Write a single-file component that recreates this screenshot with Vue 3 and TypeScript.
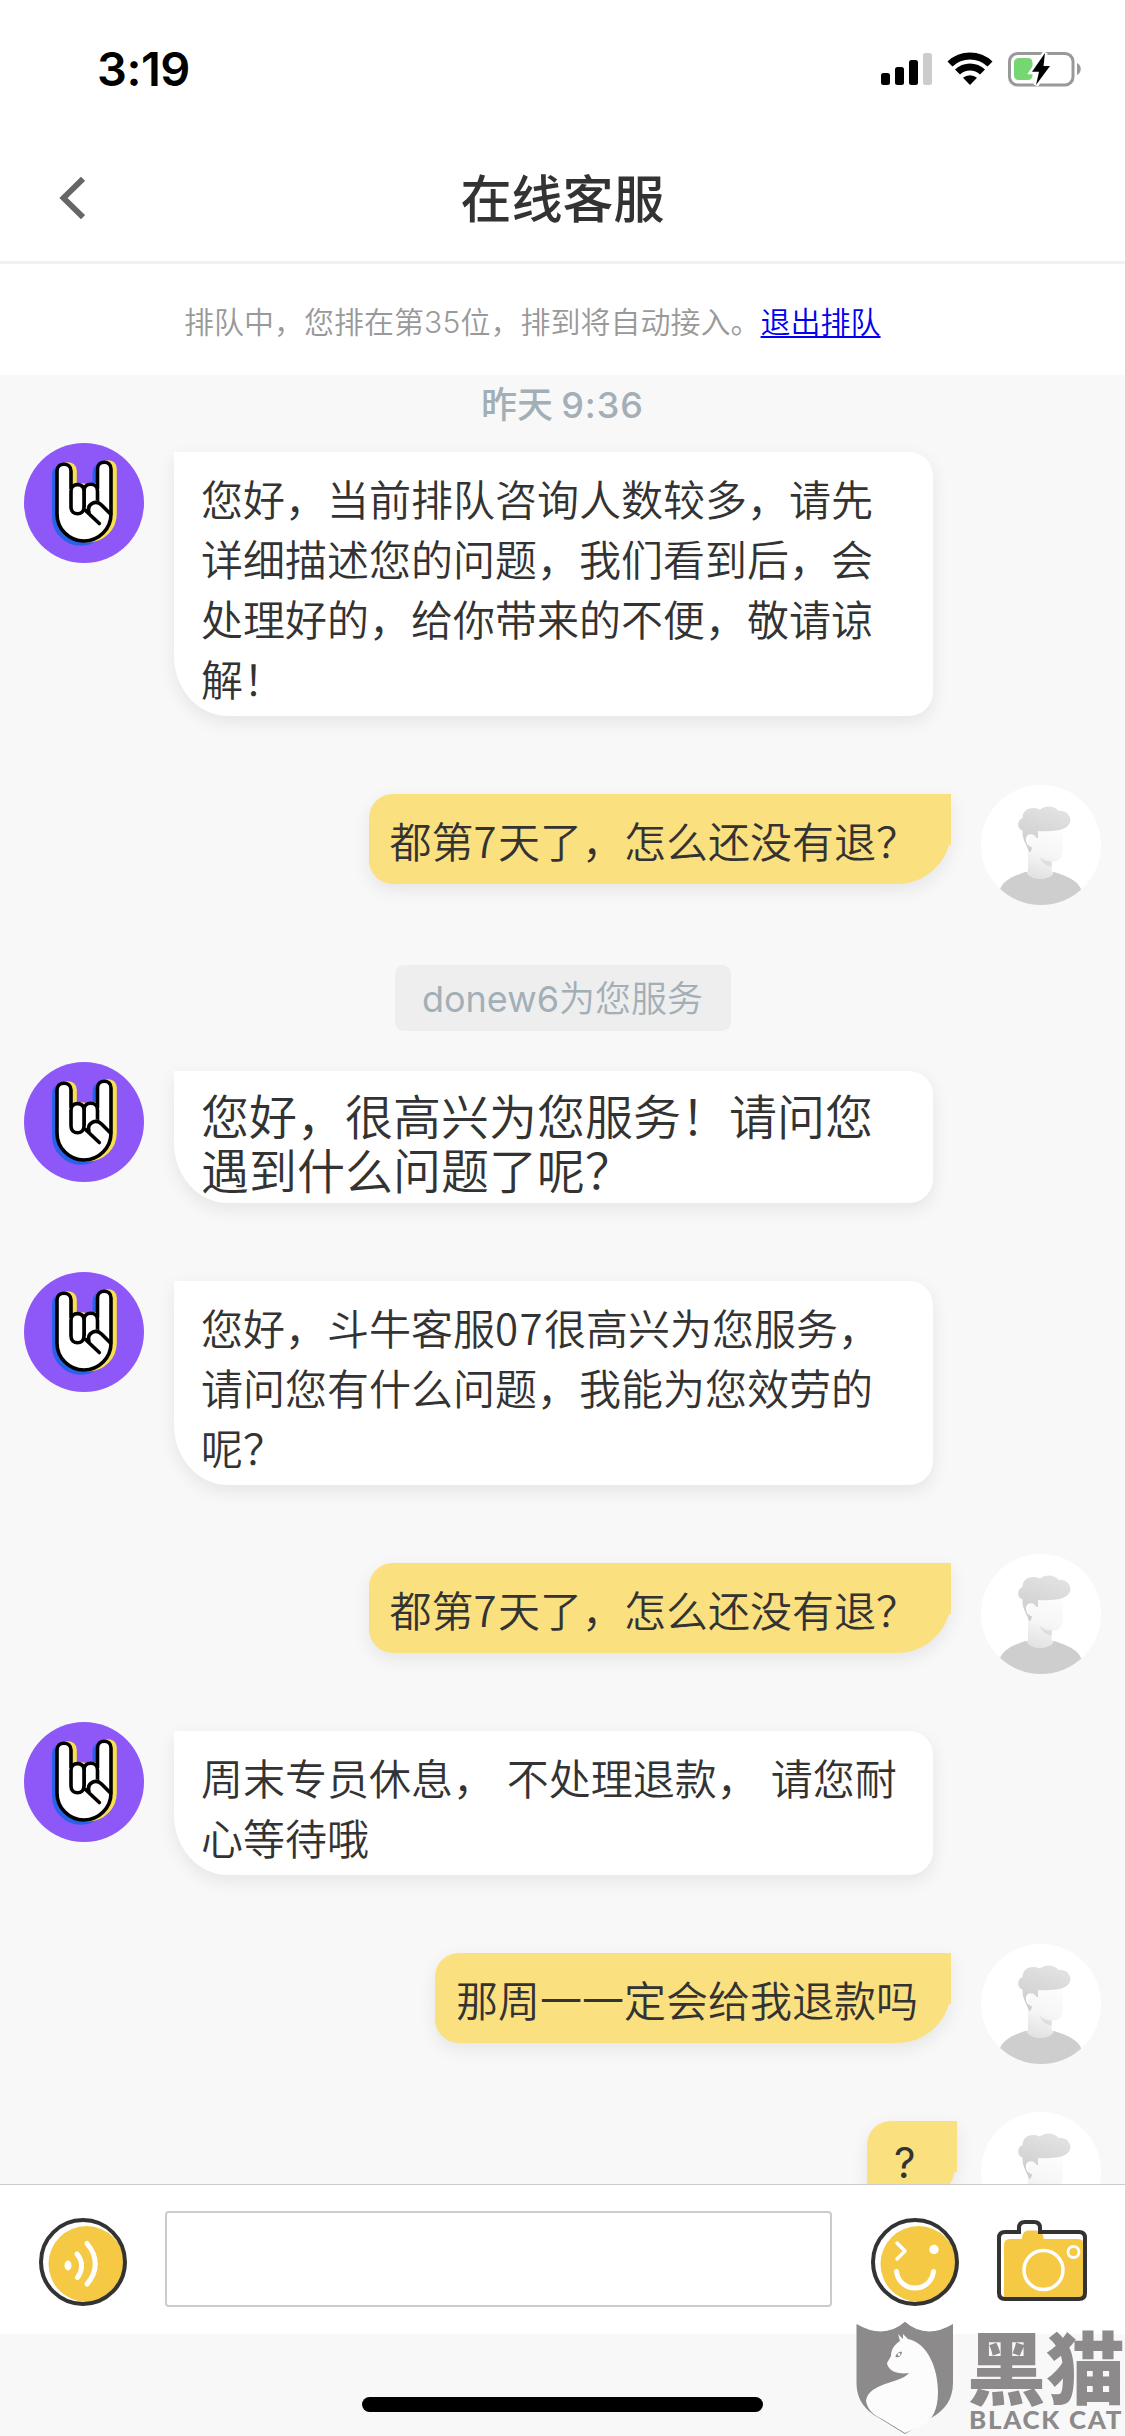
<script setup lang="ts">
interface Row {
  kind: 'agent' | 'user' | 'notice'
  lines: string[]
  large?: boolean
  short?: boolean
}

const rows: Row[] = [
  { kind: 'agent', lines: ['您好，当前排队咨询人数较多，请先', '详细描述您的问题，我们看到后，会', '处理好的，给你带来的不便，敬请谅', '解！'] },
  { kind: 'user', lines: ['都第7天了，怎么还没有退？'] },
  { kind: 'notice', lines: ['donew6为您服务'] },
  { kind: 'agent', large: true, lines: ['您好，很高兴为您服务！请问您', '遇到什么问题了呢？'] },
  { kind: 'agent', lines: ['您好，斗牛客服07很高兴为您服务，', '请问您有什么问题，我能为您效劳的', '呢？'] },
  { kind: 'user', lines: ['都第7天了，怎么还没有退？'] },
  { kind: 'agent', lines: ['周末专员休息， 不处理退款， 请您耐', '心等待哦'] },
  { kind: 'user', lines: ['那周一一定会给我退款吗'] },
  { kind: 'user', short: true, lines: ['?'] },
]

// Digits are set slightly wider than the surrounding Han text.
const split = (line: string): string[] => line.split(/(\d+)/).filter((s) => s.length > 0)
const isNum = (s: string): boolean => /^\d+$/.test(s)
</script>

<template>
  <div class="screen">
    <svg class="defs" width="0" height="0">
      <defs>
        <linearGradient id="hair" x1="0.6" y1="0" x2="0.2" y2="1">
          <stop offset="0" stop-color="#e2e2e2" />
          <stop offset="1" stop-color="#cccccc" />
        </linearGradient>
        <linearGradient id="skin" x1="0.6" y1="0" x2="0.4" y2="1">
          <stop offset="0" stop-color="#fcfcfc" />
          <stop offset="0.5" stop-color="#f6f6f6" />
          <stop offset="1" stop-color="#e2e2e2" />
        </linearGradient>
        <clipPath id="round"><circle cx="60" cy="60" r="60" /></clipPath>
        <path id="hand" d="M33 28c0-9 14-9 14 0v18c2-5 11-5 13 0 2-5 11-5 13.500 0V26c0-9 13.500-9 13.500 0v45a27 27 0 0 1-54 0z" />
      </defs>
    </svg>

    <div class="status">
      <span class="time">3:19</span>
      <svg class="status-icons" width="201" height="36" viewBox="881 51 201 36">
        <g>
          <rect x="881" y="73" width="9" height="12" rx="2.500" />
          <rect x="895" y="67" width="9" height="18" rx="2.500" />
          <rect x="909" y="60" width="9" height="25" rx="2.500" />
          <rect x="923" y="53" width="9" height="32" rx="2.500" fill="#ccc" />
        </g>
        <path d="M947.500 61.500a32.500 32.500 0 0 1 45 0l-5 5a25.500 25.500 0 0 0-35 0z" />
        <path d="M955 69.500a21.500 21.500 0 0 1 30 0l-5 5a14.500 14.500 0 0 0-20 0z" />
        <path d="M963 77.800a10.500 10.500 0 0 1 14 0l-7 7.200z" />
        <rect x="1009.500" y="53.500" width="63.500" height="31.500" rx="8" fill="none" stroke="#999" stroke-width="3" />
        <path d="M1077 63c5 2 5 10 0 12z" fill="#999" />
        <rect x="1014" y="58" width="18.500" height="22" rx="4.500" fill="#76d672" />
        <path d="M1045 53l-13 18.700h7l-3 13.300 14-19h-6.500z" stroke="#fff" stroke-width="5" />
        <path d="M1045 53l-13 18.700h7l-3 13.300 14-19h-6.500z" />
      </svg>
    </div>

    <header class="nav">
      <svg class="back" width="26" height="42" viewBox="0 0 26 42">
        <path d="M24 1.800L4.500 21 24 40.200" fill="none" stroke="#666" stroke-width="5.800" />
      </svg>
      <h1>在线客服</h1>
    </header>

    <div class="queue">
      <span>排队中，您排在第<i>35</i>位，排到将自动接入。</span><a>退出排队</a>
    </div>

    <main class="chat">
      <div class="date">昨天 <b>9:36</b></div>
      <div v-for="(row, i) in rows" :key="i" class="row" :class="[row.kind, { large: row.large, short: row.short }]">
        <svg v-if="row.kind === 'agent'" class="avatar" viewBox="0 0 120 120">
          <circle cx="60" cy="60" r="60" fill="#8e57f7" />
          <use href="#hand" x="-3.200" y="3" fill="#2962e8" stroke="#2962e8" stroke-width="3.600" />
          <use href="#hand" x="4" y="-0.300" fill="#f9e14b" stroke="#f9e14b" stroke-width="3.600" />
          <use href="#hand" fill="#fff" stroke="#000" stroke-width="3.600" />
          <g fill="#fff" stroke="#000" stroke-width="3.600" stroke-linecap="round" stroke-linejoin="round">
            <path d="M60 63V48c0-9 13.500-9 13.500 0v16" />
            <path d="M47 48v16c0 9 13 9 13 0V48c0-8.500-13-8.500-13 0z" />
            <path d="M75.300 80.500L61 67h4.500c-2-8 6-12.500 12-7L86.500 70" stroke="none" />
            <path d="M61.500 67.500l13.800 13M65 69.500c-2.500-9 7-13 12.500-7.500L86.500 71" fill="none" />
          </g>
        </svg>

        <div v-if="row.kind === 'notice'" class="pill">
          <span class="latin">donew6</span>为您服务
        </div>
        <div v-else class="bubble">
          <p v-for="(line, j) in row.lines" :key="j">
            <span v-for="(part, k) in split(line)" :key="k" :class="{ num: isNum(part) }">{{ part }}</span>
          </p>
        </div>

        <svg v-if="row.kind === 'user'" class="avatar" viewBox="0 0 120 120">
          <circle cx="60" cy="60" r="60" fill="#fff" />
          <g clip-path="url(#round)">
            <path d="M19 104c3-8 13-13 25-17h29c13 4 24 9 27 17v20H19z" fill="#cecece" />
            <path d="M50 44h31.700v22c0 7-4 11-11 10.500V86l2 2c-5 8-22 8-27 0l1.300-3V58z" fill="url(#skin)" />
            <path d="M59 72c3 3 7 4.500 11.700 4.500v5C65 81 60 77 59 72z" fill="#dedede" />
            <path d="M41.500 45.500c-6-2-5.500-10.500 0-12.500 0-10 11-12 17.500-8.500 5-4.500 15-4 18.500 1.500 6-1 11.500 3 12 9C89 44 78 47 57 46v7h-1.500c-2.500-6-10.500-4.500-10.500 1 0 4 1.500 7 6 8.500-.5 3-1.500 5-3 4.500C46.500 60 41 56 41.500 45.500z" fill="url(#hair)" />
          </g>
        </svg>
      </div>
    </main>

    <footer class="composer">
      <svg width="88" height="88" viewBox="0 0 88 88">
        <circle cx="47.500" cy="46" r="38" fill="#f5c944" />
        <circle cx="44" cy="44" r="42" fill="none" stroke="#333" stroke-width="4" />
        <ellipse cx="29" cy="47.500" rx="3.500" ry="5" fill="#fff" />
        <path d="M38 36c6 7 6 16 .5 23.500M48 25.500c11 13 11 28 0 40.500" fill="none" stroke="#fff" stroke-width="5" stroke-linecap="round" />
      </svg>
      <div class="field"></div>
      <svg width="88" height="88" viewBox="0 0 88 88">
        <circle cx="47.500" cy="46" r="38" fill="#f5c944" />
        <circle cx="44" cy="44" r="42" fill="none" stroke="#333" stroke-width="4" />
        <circle cx="63" cy="31.500" r="4.700" fill="#fff" />
        <path d="M26 25l8 8-8 8" fill="none" stroke="#fff" stroke-width="3.500" stroke-linecap="round" stroke-linejoin="round" />
        <path d="M25.500 53.500c3 22 34 22 37 0" fill="none" stroke="#fff" stroke-width="5" stroke-linecap="round" />
      </svg>
      <svg class="camera" width="90" height="82" viewBox="0 0 90 82">
        <path d="M7 25q0-6 6-6h12c0-6 3-8.500 7-8.500h7c5 0 7.500 3 7.500 8.500H81q6 0 6 6v53H7z" fill="#f5c944" />
        <path d="M8 12h14V8q0-6 6-6h9q6 0 6 6v4h39q6 0 6 6v55q0 6-6 6H8q-6 0-6-6V18q0-6 6-6z" fill="none" stroke="#333" stroke-width="4" />
        <circle cx="46.500" cy="50" r="19.500" fill="none" stroke="#fff" stroke-width="3.500" />
        <circle cx="76.500" cy="32" r="5.500" fill="none" stroke="#fff" stroke-width="2.800" />
      </svg>
    </footer>

    <div class="bottom">
      <div class="home"></div>
      <div class="brand">
        <svg width="98" height="115" viewBox="0 0 98 115">
          <path d="M.5 3Q28 19 49 .8 70 19 97 3v58c0 18-8 28-22 36L49 113 23 97C9 89 .5 79 .5 61z" fill="#8c8a8b" />
          <path d="M10 80c2-16 28-18 38-24 3-2 4-3 5-4-6 1-11 0-14-1-4-1-8-6-8-9l4-7c0-7 4-12 9-15l-2-7 5 5 0-5 5 5c20 4 30 30 30 53 0 18-6 27-13 32L49 112 26 98c-8-4-14-8-16-18z" fill="#fcfcfc" />
          <path d="M39.500 36c0-3 4-6 6.500-5-.5 4-3 6-6.500 5z" fill="#8c8a8b" />
          <circle cx="43" cy="33.500" r="1.400" fill="#fcfcfc" />
        </svg>
        <div class="brand-text">
          <strong>黑猫</strong>
          <em>BLACK CAT</em>
        </div>
      </div>
    </div>
  </div>
</template>

<style>
body {
  margin: 0;
  background: #f8f8f8;
}
</style>

<style scoped>
.screen {
  width: 1125px;
  height: 2436px;
  display: flex;
  flex-direction: column;
  overflow: hidden;
  background: #f8f8f8;
  color: #333;
  font-family: 'Noto Sans CJK SC', sans-serif;
}
.defs {
  position: absolute;
}
.status {
  height: 132px;
  flex: none;
  box-sizing: border-box;
  padding: 51px 43px 0 97px;
  display: flex;
  justify-content: space-between;
  background: #fff;
  color: #000;
}
.time {
  font: 600 47px/36px Inter, sans-serif;
  letter-spacing: -0.500px;
}
.nav {
  height: 129px;
  flex: none;
  position: relative;
  display: flex;
  align-items: center;
  justify-content: center;
  background: #fff;
  border-bottom: 3px solid #f1f1f1;
}
.back {
  position: absolute;
  left: 59px;
  top: 45px;
}
h1 {
  margin: 0 0 2px;
  font-size: 51px;
  line-height: 60px;
  font-weight: 500;
}
.queue {
  height: 111px;
  flex: none;
  box-sizing: border-box;
  padding: 34px 0 0 184px;
  background: #fff;
  color: #999;
  font-size: 30px;
  line-height: 44px;
  font-weight: 350;
  white-space: nowrap;
}
.queue i {
  font-style: normal;
  font-family: Inter, sans-serif;
  letter-spacing: 0.300px;
}
.queue a {
  color: #0000ee;
  text-decoration: underline;
  text-decoration-thickness: 2px;
  text-underline-offset: 3px;
}
.chat {
  height: 1809px;
  flex: none;
  overflow: hidden;
}
.date {
  height: 68px;
  line-height: 54px;
  text-align: center;
  font-size: 36px;
  font-weight: 500;
  color: #a3afb7;
}
.date b {
  font-family: Inter, sans-serif;
  font-weight: 500;
  letter-spacing: 1px;
}
.row {
  display: flex;
  align-items: flex-start;
}
.avatar {
  width: 120px;
  height: 120px;
  flex: none;
}
.agent {
  padding-left: 24px;
  margin-bottom: 69px;
}
.user {
  justify-content: flex-end;
  padding-right: 24px;
  margin-bottom: 48px;
}
.bubble {
  position: relative;
  box-sizing: border-box;
  margin-top: 9px;
  font-size: 42px;
  line-height: 60px;
  font-weight: 350;
  box-shadow: 0 6px 18px rgba(0, 0, 0, 0.08);
}
.bubble p {
  margin: 0;
  white-space: pre;
  word-spacing: 2.500px;
}
.num {
  letter-spacing: 1.400px;
}
.agent .bubble {
  width: 759px;
  margin-left: 30px;
  padding: 16px 0 8px 27px;
  background: #fff;
  border-radius: 0 24px 24px 54px / 0 24px 24px 60px;
}
.user .bubble {
  margin-right: 30px;
  padding: 16px 33px 14px 21px;
  background: #fbe080;
  border-radius: 24px 0 54px 24px;
}
.user .bubble::after {
  content: '';
  position: absolute;
  top: 0;
  right: 0;
  width: 24px;
  height: 51px;
  background: #fbe080;
}
.large .bubble {
  font-size: 48px;
  line-height: 54px;
}
.user.short .bubble {
  width: 90px;
  height: 90px;
  margin-right: 24px;
  padding: 12px 0 0 27px;
  font-family: Inter, sans-serif;
  font-weight: 400;
}
.notice {
  justify-content: center;
  margin: 60px 0 31px;
}
.pill {
  width: 336px;
  height: 66px;
  line-height: 63px;
  text-align: center;
  border-radius: 9px;
  background: #eee;
  color: #a3afb7;
  font-size: 36px;
  white-space: nowrap;
  font-weight: 350;
}
.latin {
  font-family: Inter, sans-serif;
  font-weight: 400;
}
.composer {
  height: 150px;
  flex: none;
  box-sizing: border-box;
  border-top: 1px solid #ccc;
  padding: 0 38px 0 39px;
  display: flex;
  align-items: center;
  background: #fff;
}
.composer svg {
  flex: none;
  margin-top: 5px;
}
.field {
  width: 667px;
  height: 96px;
  box-sizing: border-box;
  margin: 0 39px 1px 38px;
  border: 2px solid #ccc;
  border-radius: 4px;
}
.composer .camera {
  margin-left: 38px;
  margin-top: 2px;
}
.bottom {
  height: 102px;
  flex: none;
  position: relative;
}
.home {
  width: 401px;
  height: 15px;
  margin: 63px auto 0;
  border-radius: 8px;
  background: #000;
}
.brand {
  position: absolute;
  left: 856px;
  top: -13px;
  display: flex;
  color: #8c8a8b;
}
.brand-text {
  margin: 6px 0 0 13px;
  white-space: nowrap;
}
.brand strong {
  display: block;
  font-size: 79px;
  line-height: 76px;
  font-weight: 900;
}
.brand em {
  display: block;
  margin: 5px 0 0 2px;
  font: 900 24px/24px Lato, sans-serif;
  letter-spacing: 1.600px;
  transform: scaleX(1.08);
  transform-origin: left;
}
</style>
